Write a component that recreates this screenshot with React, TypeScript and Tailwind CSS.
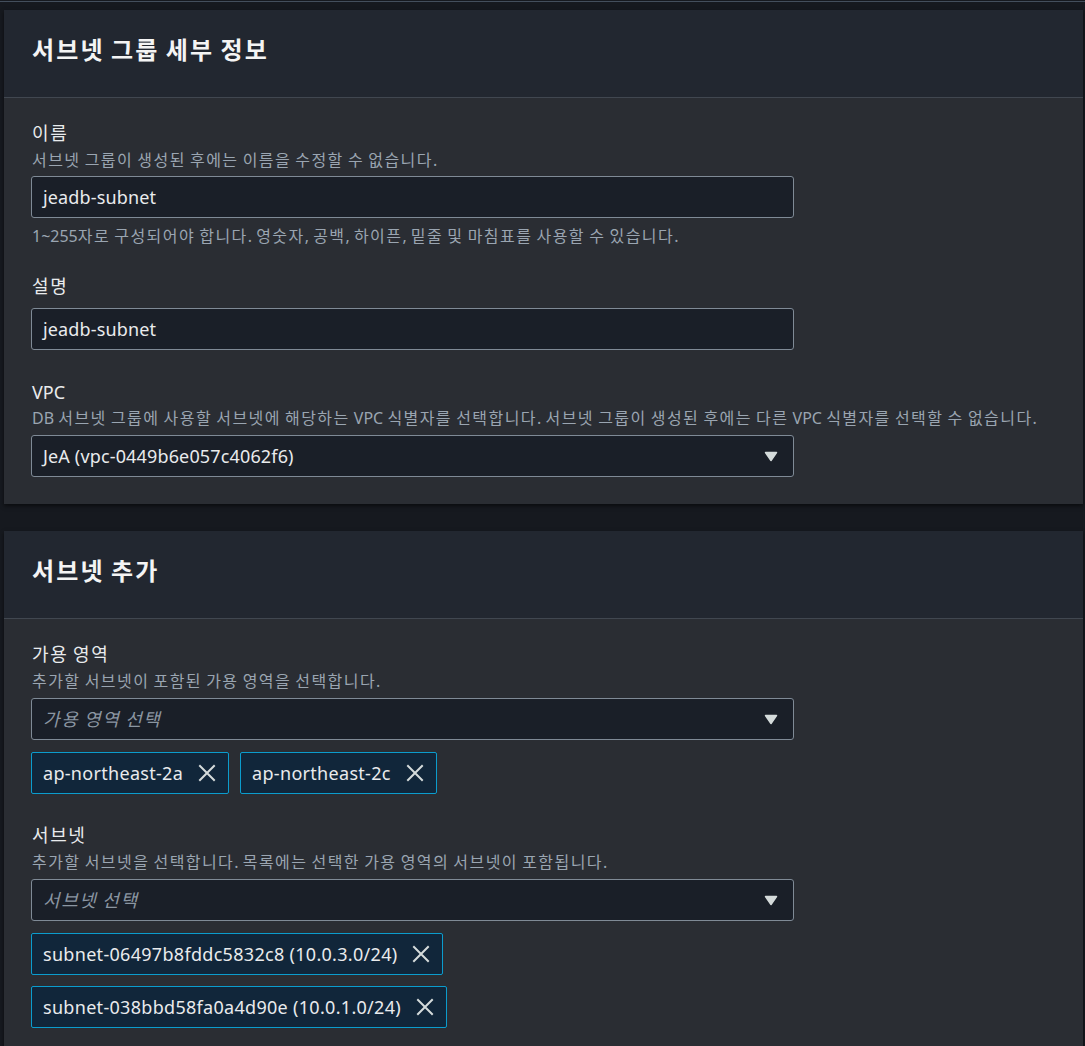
import type { ReactNode } from 'react';

const FONT = { fontFamily: '"Noto Sans", "Noto Sans CJK KR", sans-serif' };

// hangul runs in the reference are set a bit wider than Noto CJK, so space them out
function ko(text: string) {
  return text.split(/([\uAC00-\uD7A3]+)/).map((part, i) =>
    /[\uAC00-\uD7A3]/.test(part) ? (
      <span key={i} className="tracking-[0.09em]">
        {part}
      </span>
    ) : (
      part
    )
  );
}

function Caret() {
  return (
    <svg width="14" height="11" viewBox="0 0 14 11" className="shrink-0">
      <path d="M1.5 1.5 H12.5 L7 9.5 Z" fill="#d5dbdb" stroke="#d5dbdb" strokeWidth="1.5" strokeLinejoin="round" />
    </svg>
  );
}

function Cross() {
  return (
    <svg width="18" height="18" viewBox="0 0 18 18" className="shrink-0">
      <path d="M2 2 L16 16 M16 2 L2 16" stroke="#d5dbdb" strokeWidth="2" strokeLinecap="square" />
    </svg>
  );
}

function Card({ title, children }: { title: string; children: ReactNode }) {
  return (
    <section className="ml-1 mr-[2px] shadow-[0_2px_4px_rgba(0,0,0,0.55)]">
      {/* Header */}
      <div className="h-[88px] bg-[#222730] border-b border-[#414750] px-7 pt-6">
        <h2 className="text-[24px] leading-[32px] font-bold text-[#f4f4f4]">{ko(title)}</h2>
      </div>
      {/* Body */}
      <div className="bg-[#2a2d33] px-[27px] pt-[24px] pb-[27px]">{children}</div>
    </section>
  );
}

function Label({ text, className = '' }: { text: string; className?: string }) {
  return <div className={`pl-px text-[18px] leading-[22px] text-[#e9ebed] ${className}`}>{ko(text)}</div>;
}

function Hint({ text, className = '' }: { text: string; className?: string }) {
  return <div className={`pl-px text-[16px] leading-[22px] text-[#9aa5b1] ${className}`}>{ko(text)}</div>;
}

function Input({ value, select, placeholder, className = '' }: { value?: string; select?: boolean; placeholder?: string; className?: string }) {
  return (
    <div
      className={`w-[763px] h-[42px] flex items-center justify-between rounded-[3px] border border-[#7f8a96] bg-[#1a1f28] pl-[11px] pr-[15px] ${className}`}
    >
      {value ? (
        <span className="text-[18px] leading-[24px] tracking-[0.15px] text-[#e9ebed]">{value}</span>
      ) : (
        <span className="text-[18px] leading-[24px] italic text-[#8b96a2]">{ko(placeholder ?? '')}</span>
      )}
      {select && <Caret />}
    </div>
  );
}

function Token({ text, className = '' }: { text: string; className?: string }) {
  return (
    <div
      className={`h-[42px] inline-flex items-center gap-[15px] rounded-[2px] border border-[#0b9ccd] bg-[#11263a] pl-[11px] pr-[12px] ${className}`}
    >
      <span className="text-[18px] leading-[24px] tracking-[0.3px] text-[#e9ebed]">{text}</span>
      <Cross />
    </div>
  );
}

export default function App() {
  return (
    <div className="min-h-screen bg-[#16191f] pt-px pb-10" style={FONT}>
      <div className="h-px bg-[#434e5c]" />

      <div className="mt-[8px]">
        <Card title="서브넷 그룹 세부 정보">
          <Label text="이름" />
          <Hint className="mt-[5px]" text="서브넷 그룹이 생성된 후에는 이름을 수정할 수 없습니다." />
          <Input value="jeadb-subnet" className="mt-[5px]" />
          <Hint className="mt-[7px]" text="1~255자로 구성되어야 합니다. 영숫자, 공백, 하이픈, 밑줄 및 마침표를 사용할 수 있습니다." />

          <Label className="mt-[28px]" text="설명" />
          <Input value="jeadb-subnet" className="mt-[11px]" />

          <Label className="mt-[31px]" text="VPC" />
          <Hint
            className="mt-[4px]"
            text="DB 서브넷 그룹에 사용할 서브넷에 해당하는 VPC 식별자를 선택합니다. 서브넷 그룹이 생성된 후에는 다른 VPC 식별자를 선택할 수 없습니다."
          />
          <Input value="JeA (vpc-0449b6e057c4062f6)" select className="mt-[6px]" />
        </Card>
      </div>

      <div className="mt-[27px]">
        <Card title="서브넷 추가">
          <Label text="가용 영역" />
          <Hint className="mt-[5px]" text="추가할 서브넷이 포함된 가용 영역을 선택합니다." />
          <Input placeholder="가용 영역 선택" select className="mt-[6px]" />
          <div className="mt-3 flex gap-[11px]">
            <Token text="ap-northeast-2a" />
            <Token text="ap-northeast-2c" />
          </div>

          <Label className="mt-[30px]" text="서브넷" />
          <Hint className="mt-[5px]" text="추가할 서브넷을 선택합니다. 목록에는 선택한 가용 영역의 서브넷이 포함됩니다." />
          <Input placeholder="서브넷 선택" select className="mt-[6px]" />
          <div className="mt-3 flex flex-col items-start gap-[11px]">
            <Token text="subnet-06497b8fddc5832c8 (10.0.3.0/24)" />
            <Token text="subnet-038bbd58fa0a4d90e (10.0.1.0/24)" />
          </div>
        </Card>
      </div>
    </div>
  );
}
